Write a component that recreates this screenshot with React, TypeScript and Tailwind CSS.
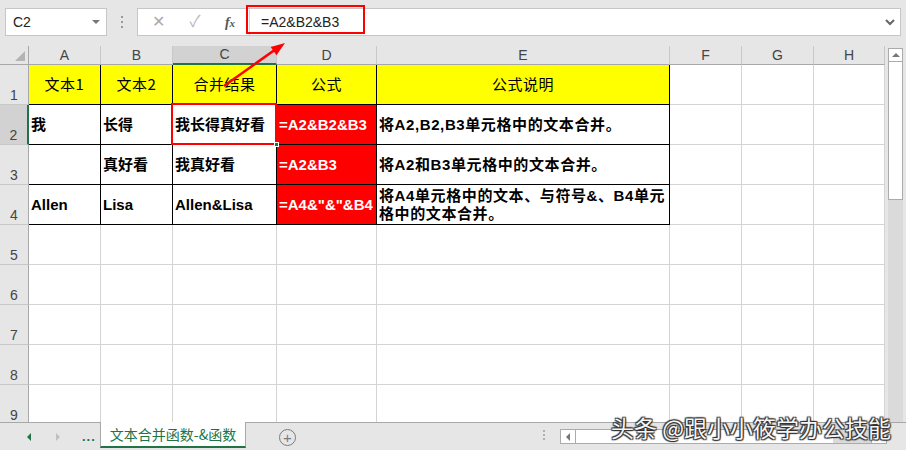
import React from 'react';

type Col = { key: string; w: string };

const cols: Col[] = [
    { key: 'A', w: 'w-[72px]' },
    { key: 'B', w: 'w-[72px]' },
    { key: 'C', w: 'w-[104px]' },
    { key: 'D', w: 'w-[100px]' },
    { key: 'E', w: 'w-[293px]' },
    { key: 'F', w: 'w-[72px]' },
    { key: 'G', w: 'w-[72px]' },
    { key: 'H', w: 'w-[71px]' },
];

const header = ['文本1', '文本2', '合并结果', '公式', '公式说明'];

const data: string[][] = [
    ['我', '长得', '我长得真好看', '=A2&B2&B3', '将A2,B2,B3单元格中的文本合并。'],
    ['', '真好看', '我真好看', '=A2&B3', '将A2和B3单元格中的文本合并。'],
    ['Allen', 'Lisa', 'Allen&Lisa', '=A4&"&"&B4', '将A4单元格中的文本、与符号&、B4单元格中的文本合并。'],
];

function RowHead(props: { n: number; active?: boolean; h: string }) {
    return (
        <div
            className={
                'w-[29px] shrink-0 flex items-end justify-center border-b border-[#c8c8c8] text-[14px] leading-[16px] text-[#444] pb-[1px] ' +
                props.h +
                (props.active ? ' bg-[#d2d2d2] border-r-2 border-r-[#217346]' : ' bg-[#e6e6e6] border-r border-r-[#a8a8a8]')
            }
        >
            {props.n}
        </div>
    );
}

function TopBar() {
    return (
        <div className="h-[46px] flex items-start pt-[8px] pl-[5px]">
            <div className="w-[102px] h-[28px] bg-white border border-[#c6c6c6] flex items-center pl-[7px] pr-[6px] text-[14px] text-[#222]">
                <span className="flex-1">C2</span>
                <span className="w-0 h-0 border-l-[4px] border-r-[4px] border-t-[4px] border-l-transparent border-r-transparent border-t-[#777]" />
            </div>
            <div className="w-[30px] h-[28px] flex flex-col items-center justify-center gap-[3px]">
                <span className="w-[2px] h-[2px] bg-[#999]" />
                <span className="w-[2px] h-[2px] bg-[#999]" />
                <span className="w-[2px] h-[2px] bg-[#999]" />
            </div>
            <div className="w-[764px] h-[28px] bg-white border border-[#c6c6c6] flex items-center">
                <span className="w-[40px] text-center text-[16px] text-[#aaa]">✕</span>
                <span className="w-[34px] text-center text-[16px] text-[#bbb]">✓</span>
                <span className="w-[36px] text-center text-[14px] italic font-bold text-[#555] font-['Liberation_Serif',serif]">
                    f<span className="text-[11px]">x</span>
                </span>
                <span className="w-[1px] h-[26px] bg-[#d6d6d6] ml-[1px]" />
                <span className="flex-1 pl-[11px] text-[14px] text-[#222]">=A2&amp;B2&amp;B3</span>
                <svg width="12" height="8" viewBox="0 0 12 8" className="mr-[4px]">
                    <path d="M2 2 L6 6 L10 2" fill="none" stroke="#666" strokeWidth="2" />
                </svg>
            </div>
        </div>
    );
}

function Grid() {
    const rowH = 'h-[40px]';
    return (
        <div className="w-[885px] h-[376px] overflow-hidden bg-white">
            {/* column headers */}
            <div className="flex h-[19px]">
                <div className="w-[29px] shrink-0 bg-[#e6e6e6] border-r border-b border-[#a8a8a8] relative">
                    <span className="absolute right-[3px] bottom-[3px] w-0 h-0 [border-bottom:10px_solid_#b4b4b4] [border-left:10px_solid_transparent]" />
                </div>
                {cols.map((c) => (
                    <div
                        key={c.key}
                        className={
                            'shrink-0 flex items-center justify-center text-[14px] text-[#444] border-r border-r-[#c8c8c8] ' +
                            c.w +
                            (c.key === 'C'
                                ? ' bg-[#d2d2d2] border-b-2 border-b-[#217346]'
                                : ' bg-[#e6e6e6] border-b border-b-[#a8a8a8]')
                        }
                    >
                        {c.key}
                    </div>
                ))}
            </div>

            {/* row 1 */}
            <div className="flex">
                <RowHead n={1} h={rowH} />
                {cols.map((c, i) =>
                    i < 5 ? (
                        <div
                            key={c.key}
                            className={
                                'shrink-0 bg-[#ffff00] border-r border-b border-black flex items-center justify-center text-[15px] text-black tracking-[0.5px] font-["Noto_Sans_CJK_SC",sans-serif] ' +
                                rowH +
                                ' ' +
                                c.w
                            }
                        >
                            {header[i]}
                        </div>
                    ) : (
                        <div key={c.key} className={'shrink-0 border-r border-b border-[#d4d4d4] ' + rowH + ' ' + c.w} />
                    )
                )}
            </div>

            {/* rows 2-4 */}
            {data.map((row, r) => (
                <div key={r} className="flex">
                    <RowHead n={r + 2} h={rowH} active={r === 0} />
                    {cols.map((c, i) => {
                        if (i >= 5) {
                            return <div key={c.key} className={'shrink-0 border-r border-b border-[#d4d4d4] ' + rowH + ' ' + c.w} />;
                        }
                        const red = i === 3;
                        return (
                            <div
                                key={c.key}
                                className={
                                    'shrink-0 border-r border-b border-black flex items-center pl-[2px] pr-[2px] text-[15px] leading-[18px] font-bold ' +
                                    rowH +
                                    ' ' +
                                    c.w +
                                    (red ? ' bg-[#ff0000] text-white' : ' text-black') +
                                    (i === 4 ? ' tracking-[0.6px]' : '')
                                }
                            >
                                {row[i]}
                            </div>
                        );
                    })}
                </div>
            ))}

            {/* rows 5-9 */}
            {[5, 6, 7, 8, 9].map((n) => (
                <div key={n} className="flex">
                    <RowHead n={n} h={rowH} />
                    {cols.map((c) => (
                        <div key={c.key} className={'shrink-0 border-r border-b border-[#d4d4d4] ' + rowH + ' ' + c.w} />
                    ))}
                </div>
            ))}
        </div>
    );
}

function VScroll() {
    return (
        <div className="w-[21px] h-[376px] pl-[3px] pt-[2px] flex flex-col">
            <div className="w-[15px] h-[14px] bg-white border border-[#ababab] flex items-center justify-center">
                <span className="w-0 h-0 border-l-[4px] border-r-[4px] border-b-[4px] border-l-transparent border-r-transparent border-b-[#777]" />
            </div>
            <div className="w-[15px] h-[138px] bg-white border border-t-0 border-[#ababab]" />
            <div className="w-[15px] flex-1 bg-[#dadada]" />
        </div>
    );
}

function TabsBar() {
    return (
        <div className="h-[28px] flex items-start border-t border-[#a8a8a8] relative">
            <div className="w-[100px] h-[27px] flex items-center">
                <span className="ml-[27px] w-0 h-0 border-t-[4px] border-b-[4px] border-r-[4px] border-t-transparent border-b-transparent border-r-[#217346]" />
                <span className="ml-[25px] w-0 h-0 border-t-[4px] border-b-[4px] border-l-[4px] border-t-transparent border-b-transparent border-l-[#c0c0c0]" />
                <span className="ml-[22px] text-[13px] font-bold text-[#217346] leading-none tracking-[1px]">...</span>
            </div>
            <div className="w-[146px] h-[26px] -mt-[1px] bg-white border-l border-r border-[#a8a8a8] border-b-2 border-b-[#217346] flex items-center justify-center text-[14px] text-[#217346] font-['Noto_Sans_CJK_SC',sans-serif]">
                文本合并函数-&amp;函数
            </div>
            <div className="ml-[33px] mt-[6px] w-[17px] h-[17px] rounded-full border border-[#7a7a7a] flex items-center justify-center text-[#7a7a7a] text-[15px] leading-none">
                +
            </div>
            <div className="ml-[247px] mt-[7px] flex flex-col gap-[2px]">
                <span className="w-[2px] h-[2px] bg-[#b0b0b0]" />
                <span className="w-[2px] h-[2px] bg-[#b0b0b0]" />
                <span className="w-[2px] h-[2px] bg-[#b0b0b0]" />
            </div>
            <div className="ml-[15px] mt-[6px] w-[327px] h-[15px] flex border border-[#ababab] bg-white">
                <div className="w-[15px] border-r border-[#ababab] flex items-center justify-center">
                    <span className="w-0 h-0 border-t-[4px] border-b-[4px] border-r-[4px] border-t-transparent border-b-transparent border-r-[#777]" />
                </div>
                <div className="w-[257px]" />
                <div className="flex-1 bg-[#dadada]" />
                <div className="w-[15px] border-l border-[#ababab] flex items-center justify-center">
                    <span className="w-0 h-0 border-t-[4px] border-b-[4px] border-l-[4px] border-t-transparent border-b-transparent border-l-[#777]" />
                </div>
            </div>
        </div>
    );
}

export default function App() {
    return (
        <div className="w-[906px] h-[450px] relative overflow-hidden bg-[#e6e6e6] font-['Liberation_Sans','Noto_Sans_CJK_SC',sans-serif]">
            <TopBar />
            <div className="flex">
                <Grid />
                <VScroll />
            </div>
            <TabsBar />

            {/* selected cell C2 */}
            <div className="absolute left-[171px] top-[103px] w-[106px] h-[42px] border-2 border-[#ff0000]" />
            <div className="absolute left-[274px] top-[142px] w-[5px] h-[5px] bg-[#217346] border border-white" />

            {/* red annotation on formula */}
            <div className="absolute left-[246px] top-[5px] w-[119px] h-[29px] border-2 border-[#ff0000]" />

            <svg className="absolute left-0 top-0 pointer-events-none" width="906" height="450">
                <line x1="224" y1="86" x2="276" y2="49" stroke="#ff0000" strokeWidth="2.5" />
                <polygon points="285,43 276.5,55.2 270.7,47" fill="#ff0000" />
            </svg>

            {/* watermark */}
            <div className="absolute left-[611px] top-[412px] text-[23px] leading-[30px] text-[#f6f6f6] font-['Noto_Sans_CJK_SC',sans-serif] [text-shadow:0_0_1px_#222,1px_1px_1px_#333,-1px_-1px_1px_#333,1px_-1px_1px_#333,-1px_1px_1px_#333] whitespace-nowrap">
                头条 @跟小小筱学办公技能
            </div>
        </div>
    );
}
